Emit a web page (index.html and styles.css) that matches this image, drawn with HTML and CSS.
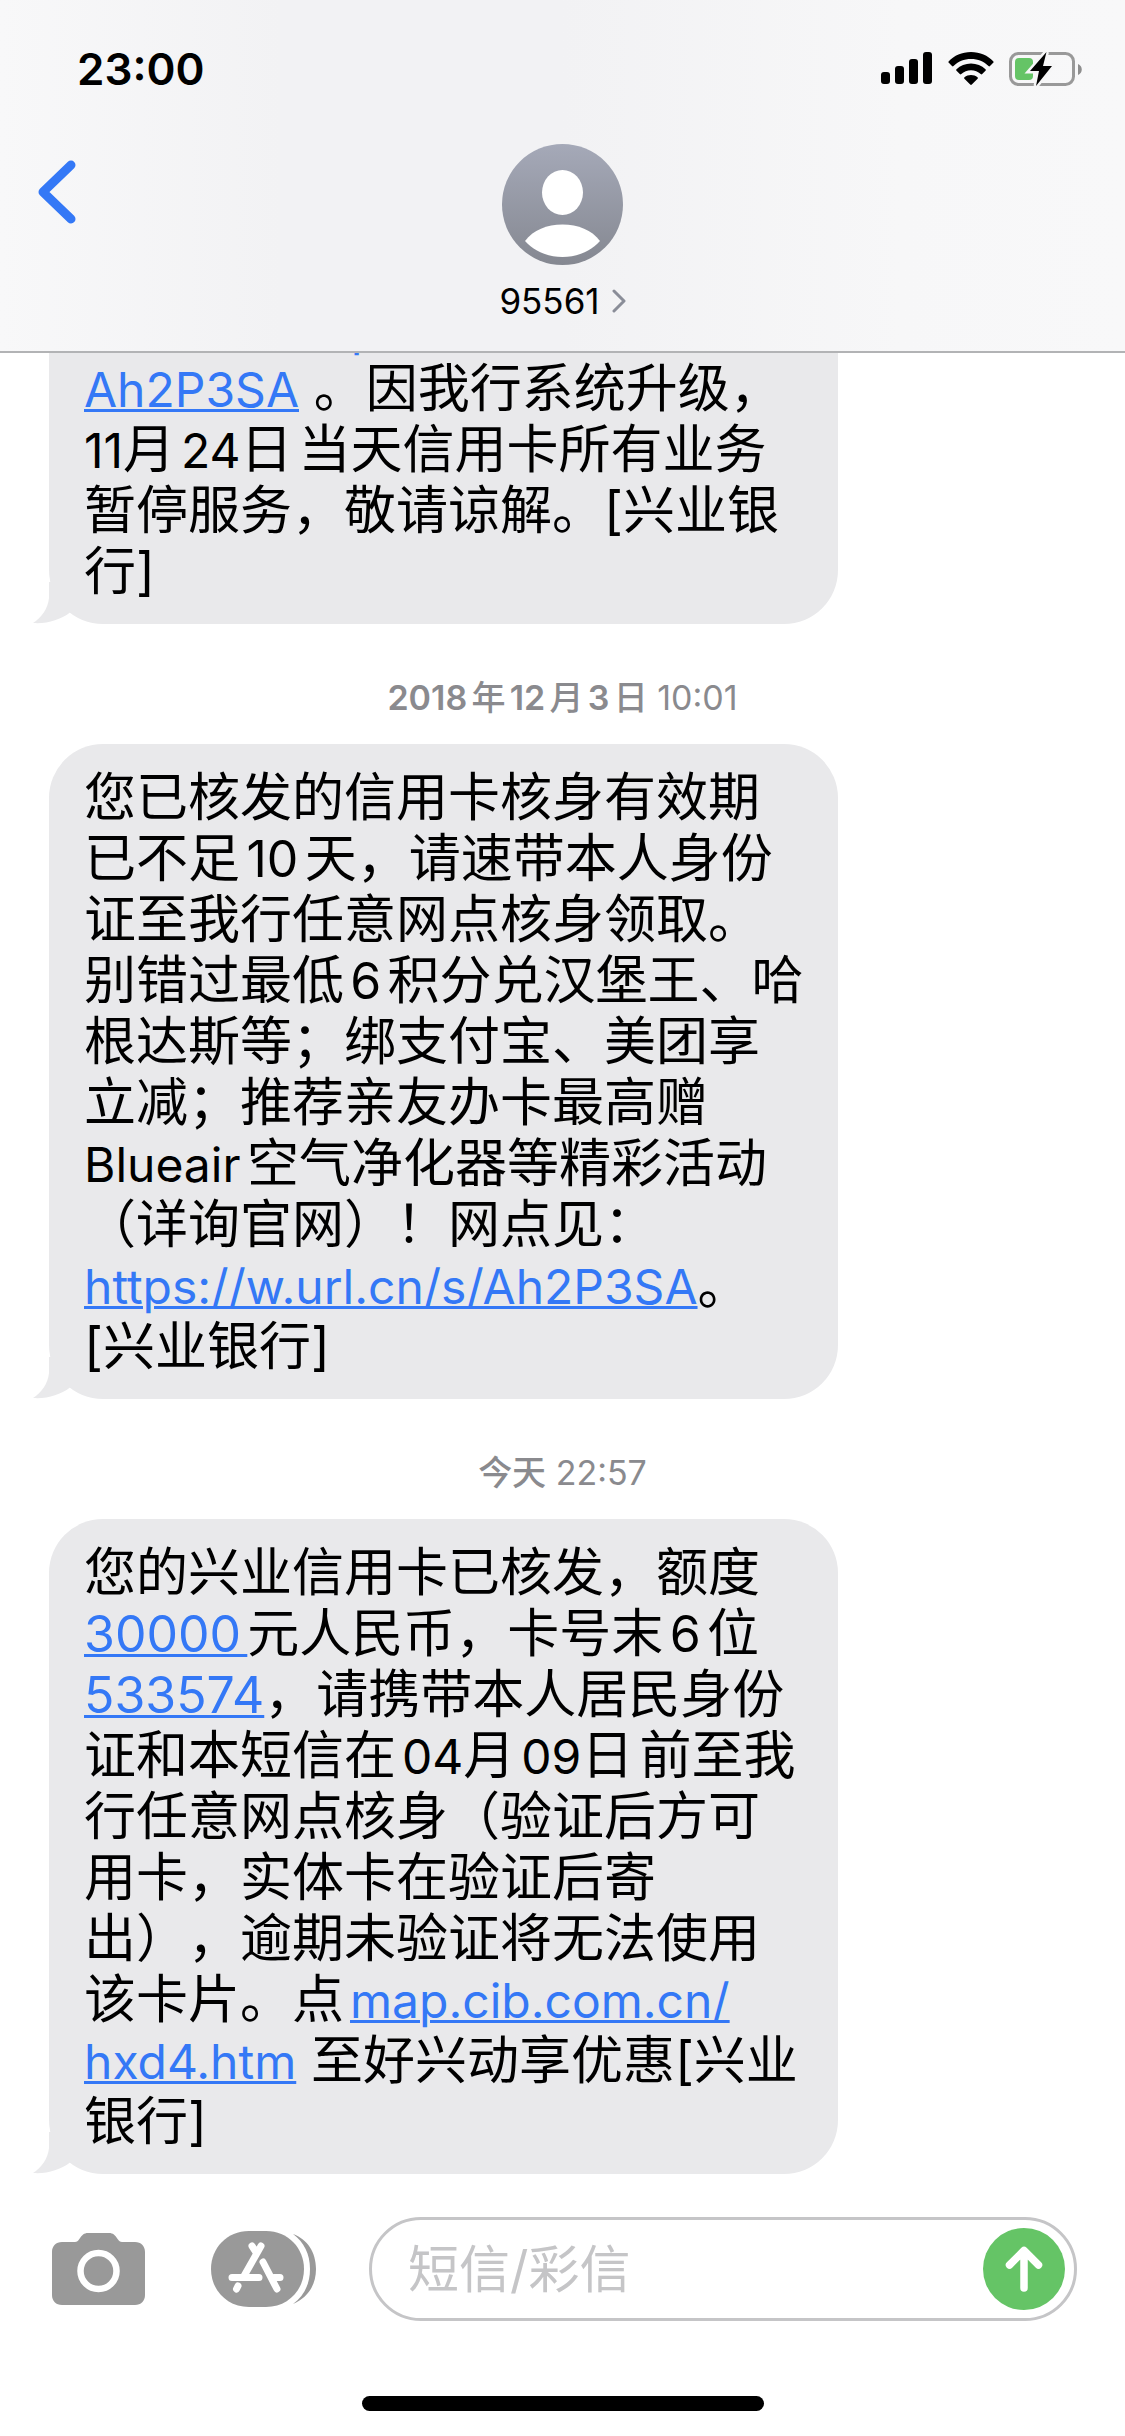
FILE: index.html
```html
<!DOCTYPE html>
<html lang="zh-CN">
<head>
<meta charset="utf-8">
<meta name="viewport" content="width=device-width">
<title>95561</title>
<link rel="stylesheet" href="styles.css">
</head>
<body>
<div class="screen">
  <header class="header">
    <div class="status">
      <time class="clock">23:00</time>
      <div class="indicators">
        <svg class="signal" width="52" height="33" viewBox="0 0 52 33" aria-hidden="true">
          <rect x="0" y="20" width="9" height="12" rx="3"/><rect x="14" y="14" width="9" height="18" rx="3"/><rect x="28" y="7" width="9" height="25" rx="3"/><rect x="42" y="0" width="9" height="32" rx="3"/>
        </svg>
        <svg class="wifi" width="46" height="34" viewBox="0 0 46 34" aria-hidden="true">
          <path d="M23 0C14 0 6 3.600 .8 9.200a1 1 0 0 0 0 1.500l3.200 3.300a1 1 0 0 0 1.500 0C10 9.600 16 7 23 7s13 2.600 17.500 7a1 1 0 0 0 1.500 0l3.200-3.300a1 1 0 0 0 0-1.500C40 3.600 32 0 23 0Z"/>
          <path d="M23 11.500c-5.600 0-10.700 2.200-14.500 5.800a1 1 0 0 0 0 1.500l3.300 3.300a1 1 0 0 0 1.500 0c2.600-2.400 6-3.800 9.700-3.800s7.100 1.400 9.700 3.800a1 1 0 0 0 1.500 0l3.300-3.300a1 1 0 0 0 0-1.500c-3.800-3.600-8.900-5.800-14.500-5.800Z"/>
          <path d="M23 23c-2.500 0-4.700.8-6.500 2.200a1 1 0 0 0-.1 1.500l5.800 5.900a1.100 1.100 0 0 0 1.600 0l5.800-5.900a1 1 0 0 0-.1-1.500C27.700 23.800 25.500 23 23 23Z"/>
        </svg>
        <svg class="battery" width="73" height="36" viewBox="0 0 73 36" aria-hidden="true">
          <rect x="1.500" y="2.500" width="63" height="31" rx="8" fill="none" stroke="#999" stroke-width="3"/>
          <rect x="6" y="7" width="18" height="22" rx="4" fill="#65c466"/>
          <path d="M69 13c5 2 5 9 0 11Z" fill="#8e8e8e"/>
          <path d="M37.500 1 21 20h9l-3 15 16-20h-9Z" fill="#000" stroke="#f6f6f7" stroke-width="5" paint-order="stroke"/>
        </svg>
      </div>
    </div>
    <nav class="nav">
      <a class="back" href="#" aria-label="返回">
        <svg width="38" height="64" viewBox="0 0 38 64" aria-hidden="true"><path d="M33 5 5 32l28 27" fill="none" stroke="#3478f6" stroke-width="9" stroke-linecap="round" stroke-linejoin="round"/></svg>
      </a>
      <a class="contact" href="#">
        <svg width="121" height="121" viewBox="0 0 121 121" aria-hidden="true">
          <defs><linearGradient id="avatar" x1="0" y1="0" x2="0" y2="1"><stop offset="0" stop-color="#a5a9b8"/><stop offset="1" stop-color="#858891"/></linearGradient></defs>
          <circle cx="60.500" cy="60.500" r="60.500" fill="url(#avatar)"/>
          <ellipse cx="60.500" cy="48.500" rx="20.500" ry="22.500" fill="#fff"/>
          <path d="M23 97C31 86 45 80.500 60.500 80.500S90 86 98 97c-9 10-22 16-37.500 16S32 107 23 97Z" fill="#fff"/>
        </svg>
        <span class="name">95561<svg width="14" height="24" viewBox="0 0 14 24" aria-hidden="true"><path d="m2 2 10 10L2 22" fill="none" stroke="#8a8d98" stroke-width="3" stroke-linecap="round" stroke-linejoin="round"/></svg></span>
      </a>
    </nav>
  </header>

  <main class="thread">
    <article class="bubble">
      <p>网点见：<a href="#">https://w.url.cn/s/<br>Ah2P3SA</a> 。因我行系统升级，<br><span class="date"><span class="latin">11</span>月</span><span class="date"><span class="latin">24</span>日</span>当天信用卡所有业务<br>暂停服务，敬请谅解。[兴业银<br>行]</p>
      <svg class="tail" width="48" height="42" viewBox="0 0 48 42" aria-hidden="true"><path d="M16 0v16C15 27 8 36 0 41c14 1 27-3 37-10.500L48 20V0Z"/></svg>
    </article>
    <p class="stamp"><b><span class="num">2018</span>年<span class="num">12</span>月<span class="num">3</span>日</b> 10:01</p>
    <article class="bubble">
      <p>您已核发的信用卡核身有效期<br>已不足<span class="digits">10</span>天，请速带本人身份<br>证至我行任意网点核身领取。<br>别错过最低<span class="digits">6</span>积分兑汉堡王、哈<br>根达斯等；绑支付宝、美团享<br>立减；推荐亲友办卡最高赠<br><span class="latin">Blueair</span>空气净化器等精彩活动<br>（详询官网）！网点见：<br><a href="#">https://w.url.cn/s/Ah2P3SA</a>。<br>[兴业银行]</p>
      <svg class="tail" width="48" height="42" viewBox="0 0 48 42" aria-hidden="true"><path d="M16 0v16C15 27 8 36 0 41c14 1 27-3 37-10.500L48 20V0Z"/></svg>
    </article>
    <p class="stamp"><b>今天</b> 22:57</p>
    <article class="bubble">
      <p>您的兴业信用卡已核发，额度<br><a class="digits" href="#">30000</a>元人民币，卡号末<span class="digits">6</span>位<br><a class="digits" href="#">533574</a>，请携带本人居民身份<br>证和本短信在<span class="date spaced"><span class="latin">04</span>月</span><span class="date"><span class="latin">09</span>日</span>前至我<br>行任意网点核身（验证后方可<br>用卡，实体卡在验证后寄<br>出），逾期未验证将无法使用<br>该卡片。点<a class="spaced" href="#">map.cib.com.cn/<br>hxd4.htm</a> 至好兴动享优惠[兴业<br>银行]</p>
      <svg class="tail" width="48" height="42" viewBox="0 0 48 42" aria-hidden="true"><path d="M16 0v16C15 27 8 36 0 41c14 1 27-3 37-10.500L48 20V0Z"/></svg>
    </article>
  </main>

  <footer class="footer">
    <form class="composer">
      <button class="tool camera" type="button" aria-label="相机">
        <svg width="93" height="73" viewBox="0 0 93 73" aria-hidden="true">
          <path d="M10 9h13c2 0 3-1 4-2.500C30 2 32 0 36 0h21c4 0 6 2 9 6.500C67 8 68 9 70 9h13c6 0 10 4 10 10v43c0 6-4 10-10 10H10C4 72 0 68 0 62V19C0 13 4 9 10 9Z" fill="#999"/>
          <circle cx="46.500" cy="38" r="18" fill="none" stroke="#fff" stroke-width="6.500"/>
        </svg>
      </button>
      <button class="tool apps" type="button" aria-label="应用">
        <svg width="106" height="76" viewBox="0 0 106 76" aria-hidden="true">
          <path d="M82 3c14 5 23 18 23 35s-9 29-23 35c11-8 17-20 17-35S93 11 82 3Z" fill="#999"/>
          <path d="M38 0h17c22 0 38 17 38 38S77 76 55 76H38C16 76 0 59 0 38S16 0 38 0Z" fill="#999"/>
          <g fill="none" stroke="#fff" stroke-width="7" stroke-linecap="round" stroke-linejoin="round">
            <path d="M41 15 45.500 22M50 15 33 45M21 46.500h27M63 46.500h6M52 31 66 58M27 55l-1.500 3"/>
          </g>
        </svg>
      </button>
      <div class="field">
        <input type="text" placeholder="短信/彩信" aria-label="短信/彩信">
        <button class="send" type="button" aria-label="发送">
          <svg width="82" height="82" viewBox="0 0 82 82" aria-hidden="true"><circle cx="41" cy="41" r="41" fill="#65c466"/><path d="M41 60V23M26.500 37 41 22.500 55.500 37" fill="none" stroke="#fff" stroke-width="7.500" stroke-linecap="round" stroke-linejoin="round"/></svg>
        </button>
      </div>
    </form>
    <div class="home"></div>
  </footer>
</div>
</body>
</html>
```
FILE: styles.css
```css
* { box-sizing: border-box; }

body {
  margin: 0;
  background: #fff;
  color: #000;
  font-family: Inter, "Noto Sans CJK SC", sans-serif;
  text-autospace: normal;
  text-spacing-trim: space-all;
}

p { margin: 0; }
svg { display: block; }
button { border: 0; padding: 0; background: none; }

.screen {
  display: flex;
  flex-direction: column;
  height: 100vh;
}

.header {
  flex: none;
  border-bottom: 2px solid #b2b3b5;
  background: linear-gradient(90deg, #f8f8f9, #f2f2f4 25%, #f2f2f4 50%, #f7f7f8 80%, #f8f8f9);
}

.status {
  display: flex;
  justify-content: space-between;
  align-items: center;
  height: 137px;
  padding: 0 43px 0 77px;
}

.clock {
  font-size: 44px;
  font-weight: 600;
}

.indicators {
  display: flex;
  align-items: center;
  gap: 15px;
}

.nav {
  display: grid;
  grid-template-columns: 1fr auto 1fr;
  padding: 7px 38px 28px;
}

.back { justify-self: start; padding-top: 16px; }

.contact {
  display: flex;
  flex-direction: column;
  align-items: center;
  gap: 14px;
  color: #000;
  text-decoration: none;
}

.name {
  display: flex;
  align-items: center;
  gap: 12px;
  font-size: 35px;
  line-height: 44px;
}

.thread {
  flex: 1;
  display: flex;
  flex-direction: column;
  justify-content: flex-end;
  min-height: 0;
  overflow: hidden;
  padding: 0 49px;
}

.bubble {
  position: relative;
  flex: none;
  align-self: flex-start;
  width: 789px;
  max-width: 100%;
  padding: 23px 0 22px 35px;
  border-radius: 54px;
  background: #e9e9eb;
  font-size: 52px;
  line-height: 61px;
  white-space: nowrap;
}

/* Latin letters are drawn a little smaller than the Chinese text around them */
.bubble a,
.latin {
  font-size: 48px;
  line-height: 48px;
}

.bubble .digits {
  font-size: 50px;
  line-height: 48px;
}

.date {
  margin-right: 6px;
  text-autospace: no-autospace;
}

.bubble a {
  color: #3478f6;
  text-decoration-thickness: 3px;
  text-underline-offset: 2px;
}

.bubble .spaced {
  margin-left: 6px;
  text-autospace: no-autospace;
}

.tail {
  position: absolute;
  left: -16px;
  bottom: 0;
  fill: #e9e9eb;
}

.stamp {
  flex: none;
  padding: 50px 0 22px;
  color: #8a8a8e;
  font-size: 34px;
  line-height: 48px;
  text-align: center;
}

.stamp b { font-weight: 500; }
.stamp .num { font-weight: 600; }

.footer {
  flex: none;
  padding: 43px 0 25px;
}

.composer {
  display: flex;
  align-items: center;
  padding: 0 48px 0 52px;
}

.tool { flex: none; }
.apps { margin: 0 52px 0 66px; }

.field {
  flex: 1;
  display: flex;
  align-items: center;
  min-width: 0;
  height: 104px;
  padding: 0 9px 0 36px;
  border: 3px solid #c5c5c7;
  border-radius: 52px;
}

.field input {
  flex: 1;
  min-width: 0;
  border: 0;
  padding: 0;
  outline: 0;
  background: none;
  font: inherit;
  font-size: 51px;
}

.field input::placeholder { color: #c5c5c7; }

.home {
  width: 402px;
  height: 15px;
  margin: 75px auto 0;
  border-radius: 8px;
  background: #000;
}
```
